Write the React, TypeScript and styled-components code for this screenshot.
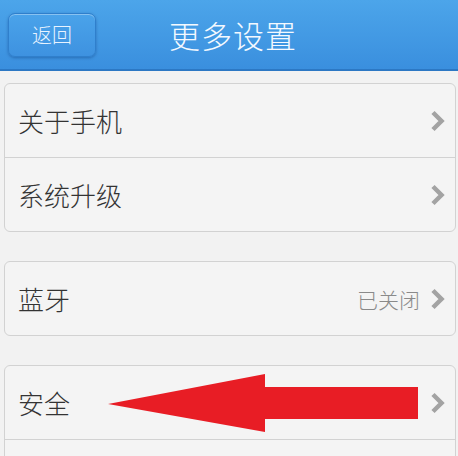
import React from "react";
import styled, { createGlobalStyle } from "styled-components";

const Global = createGlobalStyle`
  html, body {
    margin: 0;
    padding: 0;
    background: #f2f2f2;
    font-family: "Noto Sans CJK SC", "Noto Sans", sans-serif;
  }
`;

type Item = { label: string; value?: string; marked?: boolean };

const groups: Item[][] = [
  [{ label: "关于手机" }, { label: "系统升级" }],
  [{ label: "蓝牙", value: "已关闭" }],
  [{ label: "安全", marked: true }, { label: "" }],
];

const Chevron = () => (
  <ChevronIcon viewBox="0 0 16 24">
    <path d="M3 3.5 L11.5 12 L3 20.5" fill="none" stroke="#a3a3a3" strokeWidth="4.5" strokeLinejoin="miter" />
  </ChevronIcon>
);

const RedArrow = () => (
  <ArrowMark viewBox="0 0 312 60">
    <polygon points="0,30 157,0 157,13 310,13 310,45 157,45 157,58" fill="#e81d25" />
  </ArrowMark>
);

const App = () => {
  return (
    <Page>
      <Global />
      <Header>
        <BackButton>返回</BackButton>
        <Title>更多设置</Title>
      </Header>
      <Content>
        {groups.map((group, gi) => (
          <Card key={gi}>
            {group.map((item, i) => (
              <Row key={i}>
                <Label>{item.label}</Label>
                {item.value && <Value>{item.value}</Value>}
                <Chevron />
                {item.marked && <RedArrow />}
              </Row>
            ))}
          </Card>
        ))}
      </Content>
    </Page>
  );
};

export default App;

const Page = styled.div`
  width: 458px;
  height: 456px;
  overflow: hidden;
  background: #f2f2f2;
`;

const Header = styled.div`
  height: 69px;
  display: flex;
  align-items: center;
  padding-left: 8px;
  background: linear-gradient(#4ca5ea, #3a8fde);
  border-bottom: 2px solid #2c78c4;
`;

const BackButton = styled.div`
  width: 86px;
  height: 42px;
  border-radius: 7px;
  display: flex;
  align-items: center;
  justify-content: center;
  font-size: 20px;
  font-weight: 300;
  color: #e8f3ff;
  background: linear-gradient(#4aa3ea, #3e92e0);
  border: 1px solid #2f7fcc;
  box-shadow: inset 0 1px 0 rgba(255, 255, 255, 0.35), 0 1px 3px rgba(0, 40, 100, 0.35);
`;

const Title = styled.div`
  margin-left: 73px;
  font-size: 31px;
  font-weight: 300;
  color: #f4f9ff;
  letter-spacing: 1px;
`;

const Content = styled.div`
  padding: 12px 2px 0 4px;
  display: flex;
  flex-direction: column;
  gap: 29px;
`;

const Card = styled.div`
  background: #f4f4f4;
  border: 1px solid #d2d2d2;
  border-radius: 6px;
`;

const Row = styled.div`
  position: relative;
  height: 73px;
  display: flex;
  align-items: center;
  padding: 0 9px 0 13px;

  & + & {
    border-top: 1px solid #d2d2d2;
  }
`;

const Label = styled.div`
  flex: 1;
  font-size: 26px;
  font-weight: 300;
  color: #333333;
`;

const Value = styled.div`
  font-size: 21px;
  font-weight: 300;
  color: #8a8a8a;
  margin-right: 10px;
`;

const ChevronIcon = styled.svg`
  width: 16px;
  height: 24px;
`;

const ArrowMark = styled.svg`
  position: absolute;
  left: 103px;
  top: 8px;
  width: 312px;
  height: 60px;
`;
